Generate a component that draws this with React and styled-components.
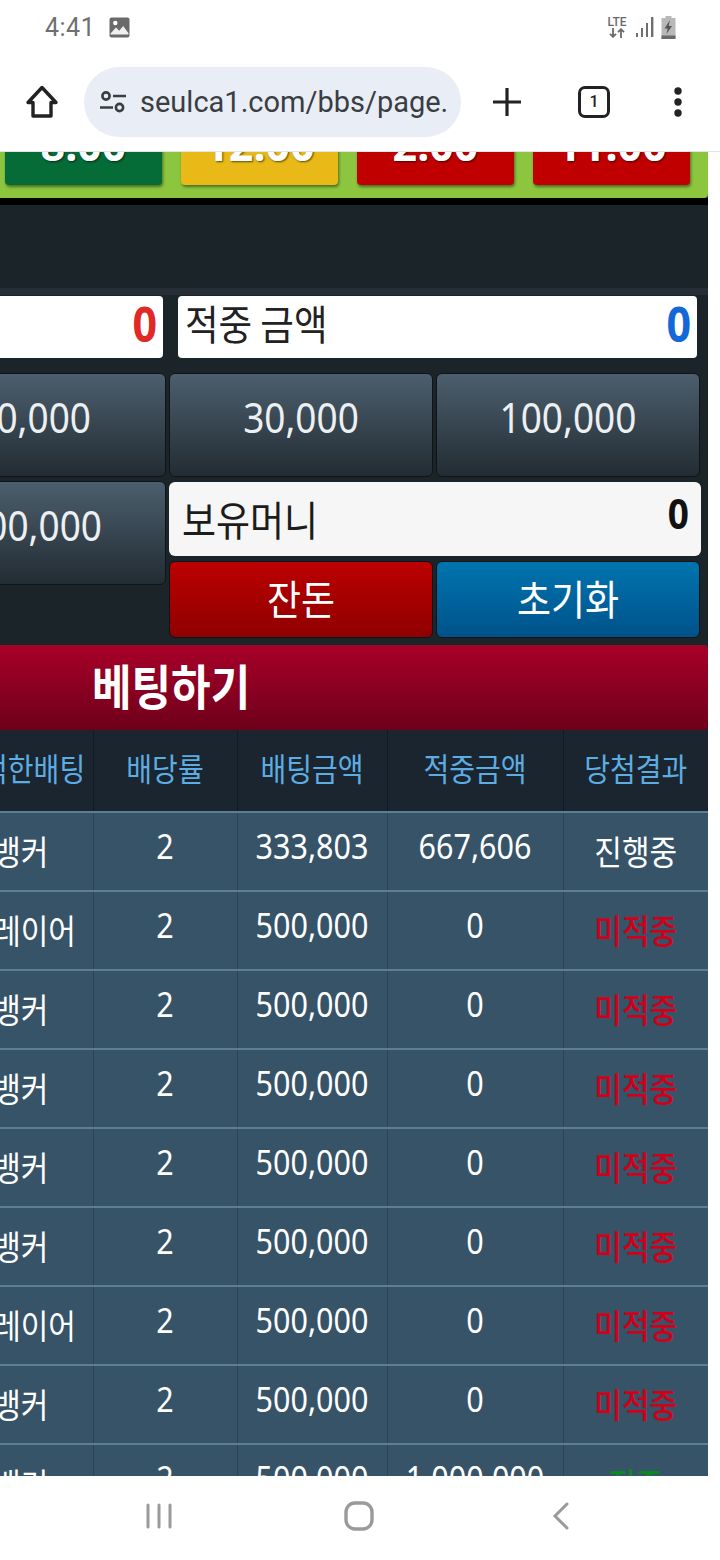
import React from "react";
import styled, { createGlobalStyle } from "styled-components";

const KOREAN = `"Noto Sans CJK KR", "Noto Sans", sans-serif`;
const LATIN = `"Noto Sans", "Noto Sans CJK KR", sans-serif`;
const PANEL = "#1b2428";

const GlobalStyle = createGlobalStyle`
  html, body {
    margin: 0;
    padding: 0;
    background: #fff;
  }
  * {
    box-sizing: border-box;
  }
`;

const Screen = styled.div`
  width: 720px;
  height: 1560px;
  display: flex;
  flex-direction: column;
  overflow: hidden;
  background: #fff;
  font-family: ${KOREAN};
`;

/* the web page text in the shot is a bit taller than it is wide */
const Tall = styled.span`
  display: inline-block;
  transform: scaleY(1.12);
`;

/* android status bar */
const StatusBar = styled.div`
  height: 50px;
  flex: none;
  display: flex;
  align-items: center;
  justify-content: space-between;
  padding: 4px 44px 0 45px;
  color: #6f6f6f;
`;
const StatusLeft = styled.div`
  display: flex;
  align-items: center;
  gap: 14px;
`;
const Clock = styled.span`
  font-family: "Roboto", sans-serif;
  font-size: 25px;
  letter-spacing: 0.5px;
`;
const StatusRight = styled.div`
  display: flex;
  align-items: center;
  gap: 6px;
`;
const Lte = styled.div`
  display: flex;
  flex-direction: column;
  align-items: center;
  width: 22px;
  margin-right: 1px;
  font-family: "Roboto", sans-serif;
  font-size: 12px;
  font-weight: 500;
  line-height: 11px;
  color: #6a6a6a;
`;

/* chrome toolbar */
const Toolbar = styled.div`
  height: 102px;
  flex: none;
  display: flex;
  align-items: center;
  padding: 2px 0 0 24px;
  border-bottom: 1px solid #e3e3e3;
`;
const ToolIcon = styled.div`
  display: flex;
  align-items: center;
  justify-content: center;
  flex: none;
  width: ${(p) => p.w}px;
  margin-left: ${(p) => p.ml || 0}px;
`;
const UrlPill = styled.div`
  width: 377px;
  height: 70px;
  margin: 0 0 0 24px;
  flex: none;
  display: flex;
  align-items: center;
  gap: 12px;
  padding: 0 0 0 14px;
  background: #e9edf6;
  border-radius: 35px;
`;
const UrlText = styled.span`
  font-family: "Roboto", sans-serif;
  font-size: 29px;
  color: #3a3d42;
  white-space: nowrap;
  overflow: hidden;
`;
const TabCount = styled.div`
  width: 32px;
  height: 32px;
  border: 3px solid #222;
  border-radius: 7px;
  display: flex;
  align-items: center;
  justify-content: center;
  font-family: "Roboto", sans-serif;
  font-size: 16px;
  font-weight: 500;
  color: #222;
`;

/* scrolled web page, the left of it runs off screen */
const Viewport = styled.div`
  flex: 1;
  min-height: 0;
  display: flex;
  flex-direction: column;
  align-items: flex-end;
  overflow: hidden;
  padding-right: 12px;
`;
const Page = styled.div`
  width: 708px;
  flex: none;
  display: flex;
  flex-direction: column;
  background: ${PANEL};
`;

const GameStrip = styled.div`
  height: 46px;
  display: flex;
  align-items: flex-end;
  gap: 19px;
  padding: 0 0 13px 5px;
  background: #8cc63f;
  border-bottom-right-radius: 4px;
  overflow: hidden;
`;
const GameButton = styled.div`
  width: 157px;
  height: 70px;
  flex: none;
  display: flex;
  align-items: flex-end;
  justify-content: center;
  padding-bottom: 10px;
  border-radius: 4px;
  background: ${(p) => p.color};
  box-shadow: 1px 2px 3px rgba(0, 0, 0, 0.45);
  color: #fff;
  font-family: ${LATIN};
  font-size: 43px;
  font-weight: 700;
  line-height: 60px;
  text-shadow: 1px 1px 2px rgba(0, 0, 0, 0.6);
`;
const BlackGap = styled.div`
  height: 7px;
  background: #000;
`;
const BlankPanel = styled.div`
  height: 83px;
  background: ${PANEL};
`;
const Controls = styled.div`
  height: 357px;
  display: flex;
  flex-direction: column;
  background: ${PANEL};
  border-top: 7px solid #262f35;
  overflow: hidden;
`;

const SummaryRow = styled.div`
  display: flex;
  gap: 15px;
  height: 62px;
  margin-top: 1px;
  padding-right: 11px;
  justify-content: flex-end;
`;
const SummaryBox = styled.div`
  width: ${(p) => p.w}px;
  flex: none;
  display: flex;
  align-items: center;
  justify-content: space-between;
  padding: 0 6px 8px 7px;
  background: #fff;
  border-radius: 4px;
`;
const SummaryLabel = styled.span`
  font-size: 36.5px;
  color: #222;
  line-height: 1;
`;
const SummaryValue = styled.span`
  font-family: ${LATIN};
  font-size: 43px;
  font-weight: 700;
  line-height: 1;
  color: ${(p) => p.color};
`;

const KeyRow = styled.div`
  display: flex;
  gap: 3px;
  justify-content: flex-end;
  padding-right: 8px;
  margin-top: 15px;
`;
const AmountKey = styled.div`
  width: ${(p) => p.w || 264}px;
  height: 104px;
  flex: none;
  display: flex;
  align-items: center;
  justify-content: ${(p) => p.align || "center"};
  padding: 0 ${(p) => p.pr || 0}px 17px 0;
  border: 1px solid #0f1418;
  border-radius: 6px;
  background: linear-gradient(#4c5f6d, #222c33);
  color: #edf0f2;
  font-family: ${LATIN};
  font-size: 37px;
  white-space: nowrap;
`;
const LowerArea = styled.div`
  display: flex;
  gap: 3px;
  justify-content: flex-end;
  padding-right: 7px;
  margin-top: 4px;
`;
const Side = styled.div`
  display: flex;
  flex-direction: column;
  gap: 5px;
  width: 532px;
  flex: none;
`;
const WalletBox = styled.div`
  height: 74px;
  margin-top: 1px;
  display: flex;
  justify-content: space-between;
  padding: 0 12px 0 13px;
  background: #f6f6f6;
  border-radius: 6px;
`;
const WalletLabel = styled.span`
  font-size: 37px;
  line-height: 73px;
  color: #1c1c1c;
`;
const WalletValue = styled.span`
  font-family: ${LATIN};
  font-size: 37px;
  font-weight: 700;
  line-height: 62px;
  color: #111;
`;
const ActionRow = styled.div`
  display: flex;
  gap: 3px;
`;
const ActionKey = styled.div`
  width: 264px;
  height: 77px;
  display: flex;
  align-items: center;
  justify-content: center;
  padding-bottom: 6px;
  border: 1px solid #0f1418;
  border-radius: 6px;
  background: ${(p) => p.bg};
  color: #fff;
  font-size: 37px;
`;

const BetBar = styled.div`
  height: 85px;
  display: flex;
  align-items: center;
  padding: 0 0 8px 92px;
  background: linear-gradient(#a70028, #6e001b);
  border-radius: 0 4px 4px 0;
  border-top: 1px solid #8c0f2b;
  color: #fff;
  font-size: 43px;
  font-weight: 700;
  line-height: 1;
`;

const TableClip = styled.div`
  display: flex;
  justify-content: flex-end;
  background: #1a2530;
`;
const BetTable = styled.table`
  width: 759px;
  flex: none;
  table-layout: fixed;
  border-collapse: collapse;
`;
const HeadCell = styled.th`
  height: 82px;
  padding: 0 0 6px;
  background: #1a2530;
  border-right: 1px solid #121b23;
  color: #5dade2;
  font-size: 28px;
  font-weight: 400;
  text-align: center;
  white-space: nowrap;
  &:last-child {
    border-right: 0;
  }
`;
const Row = styled.tr`
  height: 79px;
`;
const Cell = styled.td`
  padding: ${(p) => (p.num ? "0 0 12px" : "0 0 3px")};
  background: #375368;
  border-top: 2px solid #5d7e92;
  border-right: 1px solid #2b4357;
  color: ${(p) => p.color || "#fff"};
  font-family: ${(p) => (p.num ? LATIN : KOREAN)};
  font-size: ${(p) => (p.num ? 30.5 : 30)}px;
  font-weight: ${(p) => (p.color ? 500 : 400)};
  text-align: center;
  white-space: nowrap;
  &:last-child {
    border-right: 0;
  }
`;

/* android nav bar */
const NavBar = styled.div`
  height: 84px;
  flex: none;
  display: flex;
  align-items: center;
  padding: 0 0 4px 145px;
  background: #fff;
`;
const NavItem = styled.div`
  display: flex;
  width: ${(p) => p.w}px;
  flex: none;
`;

const HomeIcon = () => (
  <svg width="36" height="36" viewBox="0 0 36 36" fill="none" stroke="#222" strokeWidth="3.4" strokeLinejoin="round">
    <path d="M18 3.5 4 18.5h5v13.5h18V18.5h5z" />
  </svg>
);
const TuneIcon = () => (
  <svg width="30" height="30" viewBox="0 0 30 30" fill="none" stroke="#3a3d42" strokeWidth="2.6">
    <circle cx="8" cy="9" r="3.6" />
    <path d="M15 9h13M2 20.5h13" />
    <circle cx="21.5" cy="20.5" r="3.6" />
  </svg>
);
const PlusIcon = () => (
  <svg width="30" height="30" viewBox="0 0 30 30" stroke="#222" strokeWidth="3.2">
    <path d="M15 1v28M1 15h28" />
  </svg>
);
const DotsIcon = () => (
  <svg width="10" height="30" viewBox="0 0 10 30" fill="#222">
    <circle cx="5" cy="4" r="3.7" />
    <circle cx="5" cy="15" r="3.7" />
    <circle cx="5" cy="26" r="3.7" />
  </svg>
);
const PictureIcon = () => (
  <svg width="21" height="21" viewBox="0 0 21 21">
    <rect x="0.5" y="0.5" width="20" height="20" rx="2" fill="#6a6a6a" />
    <circle cx="6.3" cy="6" r="2.2" fill="#fff" />
    <path d="M1.5 16.5 7 10.5l3.2 3.2 4-4.7 5.3 7.2v1.3h-18z" fill="#fff" opacity="0.9" />
  </svg>
);
const ArrowsIcon = () => (
  <svg width="16" height="10" viewBox="0 0 16 10" fill="none" stroke="#6a6a6a" strokeWidth="1.8">
    <path d="M4 0v8.5M1 5.8l3 3 3-3M12 10V1.5M9 4.2l3-3 3 3" />
  </svg>
);
const SignalIcon = () => (
  <svg width="20" height="22" viewBox="0 0 20 22" fill="#6f6f6f">
    <rect x="1" y="17" width="2" height="4" />
    <rect x="6" y="12" width="2" height="9" />
    <rect x="11" y="7" width="2" height="14" />
    <rect x="16" y="1" width="2.4" height="20" />
  </svg>
);
const BatteryIcon = () => (
  <svg width="15" height="23" viewBox="0 0 15 23">
    <path d="M4.5 0h6v2h4v21H.5V2h4z" fill="#b8b8b8" />
    <rect x="0.5" y="19.5" width="14" height="3.5" fill="#6a6a6a" />
    <path d="M9 4 3.5 12.5h3.2L5.5 18l5.5-8H7.6z" fill="#555" />
  </svg>
);
const RecentsIcon = () => (
  <svg width="28" height="26" viewBox="0 0 28 26" stroke="#9a9a9a" strokeWidth="3" strokeLinecap="round">
    <path d="M3 2v22M14 2v22M25 2v22" />
  </svg>
);
const NavHomeIcon = () => (
  <svg width="30" height="30" viewBox="0 0 30 30" fill="none" stroke="#9a9a9a" strokeWidth="3.4">
    <rect x="2" y="2" width="26" height="26" rx="9" />
  </svg>
);
const BackIcon = () => (
  <svg width="18" height="28" viewBox="0 0 18 28" fill="none" stroke="#9a9a9a" strokeWidth="3" strokeLinecap="round">
    <path d="M15 2 3 14l12 12" />
  </svg>
);

const games = [
  { label: "8.00", color: "#056b37" },
  { label: "12.00", color: "#e8b917" },
  { label: "2.00", color: "#c00000" },
  { label: "11.00", color: "#c00000" },
];

const MISS = "#d0001a";
const bets = [
  ["뱅커", "2", "333,803", "667,606", "진행중"],
  ["플레이어", "2", "500,000", "0", "미적중", MISS],
  ["뱅커", "2", "500,000", "0", "미적중", MISS],
  ["뱅커", "2", "500,000", "0", "미적중", MISS],
  ["뱅커", "2", "500,000", "0", "미적중", MISS],
  ["뱅커", "2", "500,000", "0", "미적중", MISS],
  ["플레이어", "2", "500,000", "0", "미적중", MISS],
  ["뱅커", "2", "500,000", "0", "미적중", MISS],
  ["뱅커", "2", "500,000", "1,000,000", "적중", "#0a8a1e"],
];

export default function App() {
  return (
    <Screen>
      <GlobalStyle />
      <StatusBar>
        <StatusLeft>
          <Clock>4:41</Clock>
          <PictureIcon />
        </StatusLeft>
        <StatusRight>
          <Lte>
            LTE
            <ArrowsIcon />
          </Lte>
          <SignalIcon />
          <BatteryIcon />
        </StatusRight>
      </StatusBar>

      <Toolbar>
        <ToolIcon w={36}>
          <HomeIcon />
        </ToolIcon>
        <UrlPill>
          <TuneIcon />
          <UrlText>seulca1.com/bbs/page.</UrlText>
        </UrlPill>
        <ToolIcon w={30} ml={31}>
          <PlusIcon />
        </ToolIcon>
        <ToolIcon w={32} ml={56}>
          <TabCount>1</TabCount>
        </ToolIcon>
        <ToolIcon w={10} ml={63}>
          <DotsIcon />
        </ToolIcon>
      </Toolbar>

      <Viewport>
        <Page>
          <GameStrip>
            {games.map((g) => (
              <GameButton key={g.label} color={g.color}>
                {g.label}
              </GameButton>
            ))}
          </GameStrip>
          <BlackGap />
          <BlankPanel />
          <Controls>
            <SummaryRow>
              <SummaryBox w={190}>
                <span />
                <SummaryValue color="#e02a27">
                  <Tall>0</Tall>
                </SummaryValue>
              </SummaryBox>
              <SummaryBox w={519}>
                <SummaryLabel>
                  <Tall>적중 금액</Tall>
                </SummaryLabel>
                <SummaryValue color="#1268d8">
                  <Tall>0</Tall>
                </SummaryValue>
              </SummaryBox>
            </SummaryRow>
            <KeyRow>
              <AmountKey w={190} align="flex-end" pr={74}>
                <Tall>10,000</Tall>
              </AmountKey>
              <AmountKey>
                <Tall>30,000</Tall>
              </AmountKey>
              <AmountKey>
                <Tall>100,000</Tall>
              </AmountKey>
            </KeyRow>
            <LowerArea>
              <AmountKey w={190} align="flex-end" pr={63}>
                <Tall>500,000</Tall>
              </AmountKey>
              <Side>
                <WalletBox>
                  <WalletLabel>
                    <Tall>보유머니</Tall>
                  </WalletLabel>
                  <WalletValue>
                    <Tall>0</Tall>
                  </WalletValue>
                </WalletBox>
                <ActionRow>
                  <ActionKey bg="linear-gradient(#bb0000, #8f0000)">
                    <Tall>잔돈</Tall>
                  </ActionKey>
                  <ActionKey bg="linear-gradient(#0074ae, #00528a)">
                    <Tall>초기화</Tall>
                  </ActionKey>
                </ActionRow>
              </Side>
            </LowerArea>
          </Controls>
          <BetBar>
            <Tall>베팅하기</Tall>
          </BetBar>
          <TableClip>
            <BetTable>
              <colgroup>
                <col width="144" />
                <col width="144" />
                <col width="150" />
                <col width="176" />
                <col width="145" />
              </colgroup>
              <thead>
                <tr>
                  <HeadCell>
                    <Tall>선적한배팅</Tall>
                  </HeadCell>
                  <HeadCell>
                    <Tall>배당률</Tall>
                  </HeadCell>
                  <HeadCell>
                    <Tall>배팅금액</Tall>
                  </HeadCell>
                  <HeadCell>
                    <Tall>적중금액</Tall>
                  </HeadCell>
                  <HeadCell>
                    <Tall>당첨결과</Tall>
                  </HeadCell>
                </tr>
              </thead>
              <tbody>
                {bets.map((b, i) => (
                  <Row key={i}>
                    <Cell>
                      <Tall>{b[0]}</Tall>
                    </Cell>
                    <Cell num="1">
                      <Tall>{b[1]}</Tall>
                    </Cell>
                    <Cell num="1">
                      <Tall>{b[2]}</Tall>
                    </Cell>
                    <Cell num="1">
                      <Tall>{b[3]}</Tall>
                    </Cell>
                    <Cell color={b[5]}>
                      <Tall>{b[4]}</Tall>
                    </Cell>
                  </Row>
                ))}
              </tbody>
            </BetTable>
          </TableClip>
        </Page>
      </Viewport>

      <NavBar>
        <NavItem w={199}>
          <RecentsIcon />
        </NavItem>
        <NavItem w={208}>
          <NavHomeIcon />
        </NavItem>
        <NavItem w={18}>
          <BackIcon />
        </NavItem>
      </NavBar>
    </Screen>
  );
}
